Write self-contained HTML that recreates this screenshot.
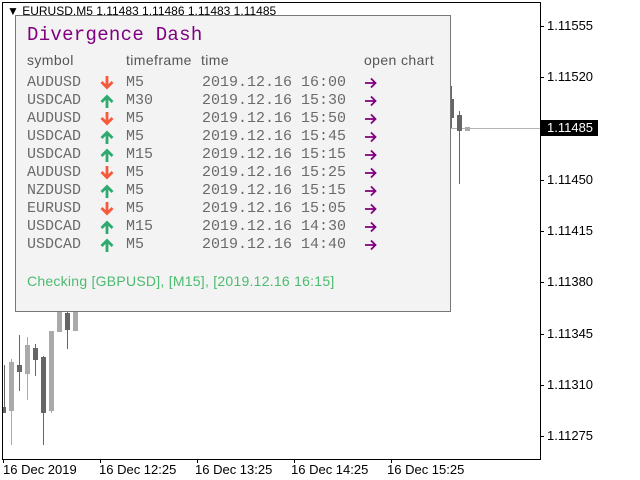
<!DOCTYPE html>
<html><head><style>
body{margin:0;width:640px;height:480px;background:#fff;position:relative;overflow:hidden;font-family:"Liberation Sans",sans-serif}
.abs{position:absolute}
.mono{font-family:"Liberation Mono","DejaVu Sans Mono",monospace}
.row{position:absolute;left:0;height:18px;font-size:15px;color:#6a6a6a;line-height:18px}
.row span{position:absolute;white-space:nowrap}
.pl{position:absolute;left:547px;font-size:13px;color:#000;line-height:14px}
.tl{position:absolute;top:462px;font-size:13px;color:#000;white-space:nowrap}
.hd{position:absolute;top:36px;font-size:14px;color:#555;letter-spacing:0.4px}
</style></head><body>
<div class="abs" style="left:2px;top:2px;width:537px;height:456px;border:1px solid #000"></div>
<div class="abs" style="left:7px;top:3px;font-size:12px;line-height:16px;white-space:nowrap">&#9660; EURUSD,M5  1.11483 1.11486 1.11483 1.11485</div>
<div class="pl" style="top:19px">1.11555</div>
<div class="pl" style="top:70px">1.11520</div>
<div class="abs" style="left:540px;top:120px;width:58px;height:16px;background:#000"></div>
<div class="pl" style="top:121px;color:#fff">1.11485</div>
<div class="pl" style="top:173px">1.11450</div>
<div class="pl" style="top:224px">1.11415</div>
<div class="pl" style="top:275px">1.11380</div>
<div class="pl" style="top:327px">1.11345</div>
<div class="pl" style="top:378px">1.11310</div>
<div class="pl" style="top:429px">1.11275</div>
<svg class="abs" style="left:0;top:0" width="640" height="480">
<g stroke="#000" stroke-width="1">
<line x1="540" y1="26.5" x2="544" y2="26.5"/><line x1="540" y1="77.5" x2="544" y2="77.5"/>
<line x1="540" y1="180.5" x2="544" y2="180.5"/><line x1="540" y1="231.5" x2="544" y2="231.5"/><line x1="540" y1="282.5" x2="544" y2="282.5"/>
<line x1="540" y1="334.5" x2="544" y2="334.5"/><line x1="540" y1="385.5" x2="544" y2="385.5"/><line x1="540" y1="436.5" x2="544" y2="436.5"/>
<line x1="3.5" y1="459" x2="3.5" y2="463"/><line x1="100.5" y1="459" x2="100.5" y2="463"/><line x1="197.5" y1="459" x2="197.5" y2="463"/><line x1="294.5" y1="459" x2="294.5" y2="463"/><line x1="391.5" y1="459" x2="391.5" y2="463"/>
</g>
<line x1="450" y1="128.5" x2="540" y2="128.5" stroke="#b4b4b4"/>
<g>
<line x1="4.5" y1="365" x2="4.5" y2="413" stroke="#666"/><rect x="3" y="407" width="3" height="6" fill="#666"/>
<line x1="11.5" y1="359" x2="11.5" y2="445" stroke="#aaa"/><rect x="9" y="362" width="5" height="49" fill="#aaa"/>
<line x1="19.5" y1="335" x2="19.5" y2="391" stroke="#666"/><rect x="17" y="365" width="5" height="7" fill="#666"/>
<line x1="27.5" y1="337" x2="27.5" y2="400" stroke="#aaa"/><rect x="25" y="345" width="5" height="29" fill="#aaa"/>
<line x1="35.5" y1="344" x2="35.5" y2="376" stroke="#666"/><rect x="33" y="348" width="5" height="12" fill="#666"/>
<line x1="43.5" y1="356" x2="43.5" y2="445" stroke="#666"/><rect x="41" y="357" width="5" height="56" fill="#666"/>
<line x1="51.5" y1="331" x2="51.5" y2="413" stroke="#aaa"/><rect x="49" y="331" width="5" height="80" fill="#aaa"/>
<rect x="57" y="311" width="5" height="21" fill="#aaa"/>
<line x1="67.5" y1="311" x2="67.5" y2="349" stroke="#666"/><rect x="65" y="313" width="5" height="17" fill="#666"/>
<rect x="73" y="311" width="5" height="20" fill="#aaa"/>
<line x1="451.5" y1="86" x2="451.5" y2="128" stroke="#666"/><rect x="450" y="99" width="4" height="19" fill="#666"/>
<line x1="459.5" y1="111" x2="459.5" y2="184" stroke="#666"/><rect x="457" y="115" width="5" height="16" fill="#666"/>
<rect x="465" y="127" width="5" height="4" fill="#aaa"/>
</g>
</svg>
<div class="tl" style="left:3px">16 Dec 2019</div>
<div class="tl" style="left:99px">16 Dec 12:25</div>
<div class="tl" style="left:195px">16 Dec 13:25</div>
<div class="tl" style="left:291px">16 Dec 14:25</div>
<div class="tl" style="left:387px">16 Dec 15:25</div>
<div class="abs" style="left:15px;top:15px;width:434px;height:295px;background:#f3f3f3;border:1px solid #777">
<div class="abs mono" style="left:11px;top:8px;font-size:19px;color:#800080;letter-spacing:0.3px;white-space:nowrap">Divergence Dash</div>
<div class="hd" style="left:11px">symbol</div>
<div class="hd" style="left:110px">timeframe</div>
<div class="hd" style="left:185px">time</div>
<div class="hd" style="left:348px">open chart</div>
<div class="abs" style="left:11px;top:257px;font-size:14px;color:#4cbb70;white-space:nowrap;letter-spacing:0.25px">Checking [GBPUSD], [M15], [2019.12.16 16:15]</div>
</div>
<div id="rows" class="mono"></div>
<script>
var d=[["AUDUSD",0,"M5","16:00"],["USDCAD",1,"M30","15:30"],["AUDUSD",0,"M5","15:50"],["USDCAD",1,"M5","15:45"],["USDCAD",1,"M15","15:15"],["AUDUSD",0,"M5","15:25"],["NZDUSD",1,"M5","15:15"],["EURUSD",0,"M5","15:05"],["USDCAD",1,"M15","14:30"],["USDCAD",1,"M5","14:40"]];
var h="";
d.forEach(function(r,i){var y=74+i*18;
var ar=r[1]?'<svg width="14" height="15" style="position:absolute;left:100px;top:2px"><path d="M7 14V3M1.5 8L7 2.5 12.5 8" stroke="#2eaa6e" stroke-width="2.8" fill="none"/></svg>':'<svg width="14" height="15" style="position:absolute;left:100px;top:1px"><path d="M7 1V12M1.5 7L7 12.5 12.5 7" stroke="#f55a3c" stroke-width="2.8" fill="none"/></svg>';
h+='<div class="row" style="top:'+y+'px;width:640px"><span style="left:27px">'+r[0]+'</span>'+ar+'<span style="left:126px">'+r[2]+'</span><span style="left:202px">2019.12.16 '+r[3]+'</span><svg width="14" height="14" style="position:absolute;left:364px;top:2px"><path d="M1 7H11.5M7 2.5L11.5 7 7 11.5" stroke="#800080" stroke-width="1.8" fill="none"/></svg></div>';});
document.getElementById("rows").innerHTML=h;
</script>
</body></html>
